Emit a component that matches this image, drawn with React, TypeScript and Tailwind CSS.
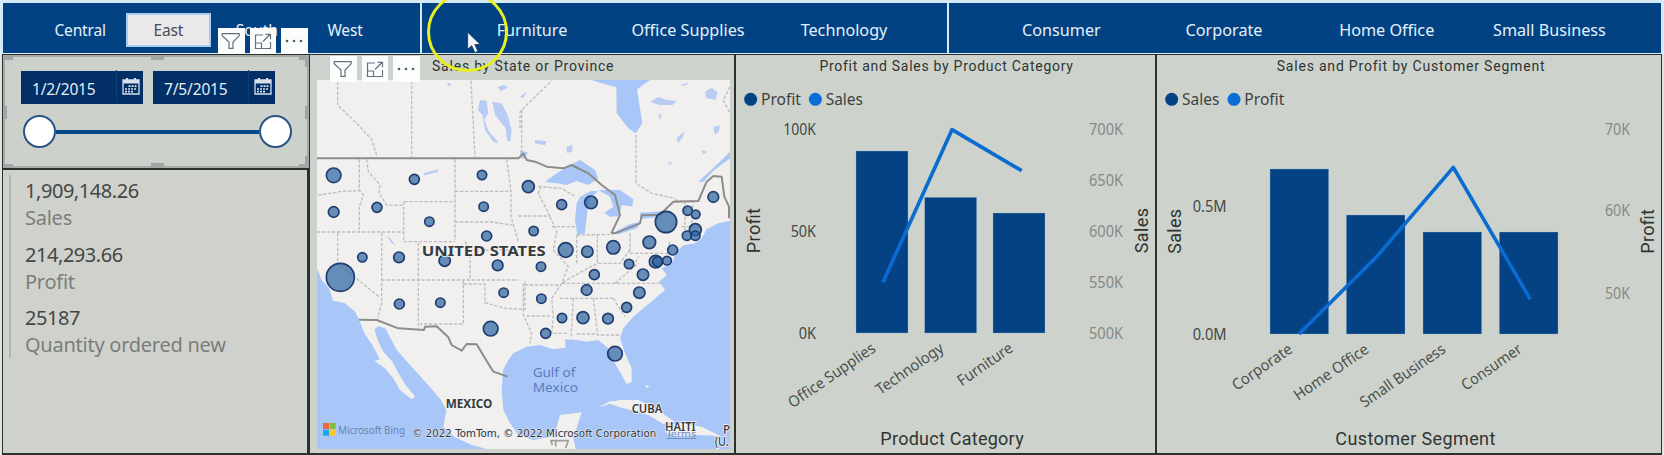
import React from "react";

const UI = "'Noto Sans', 'Open Sans', sans-serif";
const DIN = "Roboto, 'Liberation Sans', sans-serif";

type TabGroup = { items: string[]; box: string; cell: string };

const GROUPS: TabGroup[] = [
  { items: ["Central", "East", "South", "West"], box: "w-[417px] pl-[33px] text-[15.5px] tracking-[-0.15px]", cell: "w-[88.3px]" },
  { items: ["Furniture", "Office Supplies", "Technology"], box: "w-[525px] pl-[32px] text-[16.2px]", cell: "w-[156px]" },
  { items: ["Consumer", "Corporate", "Home Office", "Small Business"], box: "flex-1 pl-[31px] text-[16.2px]", cell: "w-[162.7px]" },
];

function Header() {
  return (
    <header className="flex h-[54px] w-full gap-[2px] bg-[#d6eaf6] pt-[3px] pb-px pl-[3px] pr-[3px]">
      {GROUPS.map((g) => (
        <div key={g.items[0]} className={`flex items-center bg-[#024283] ${g.box}`}>
          {g.items.map((t) => (
            <div key={t} className={`flex shrink-0 justify-center ${g.cell}`}>
              {t === "East" ? (
                <span className="mt-[3px] flex h-[34px] w-[85px] items-center justify-center border-2 border-[#a9cdf0] bg-[#e9e8ea] pt-[2px] text-[#4b4b50]">
                  {t}
                </span>
              ) : (
                <span className="pt-[5px] whitespace-nowrap text-[#e2f1fb]">{t}</span>
              )}
            </div>
          ))}
        </div>
      ))}
    </header>
  );
}

function Toolbar({ className }: { className: string }) {
  const b = "flex h-[26px] w-[26.5px] items-center justify-center bg-[#fcfdfd]";
  return (
    <div className={`absolute z-10 flex gap-[5px] ${className}`}>
      <div className={b}>
        <svg width="20" height="18" viewBox="0 0 20 18" fill="none" stroke="#66707c" strokeWidth="1.2">
          <path d="M1.2 1.6h17v2.2L12 10v6.4H8V10L1.2 3.8z" />
        </svg>
      </div>
      <div className={b}>
        <svg width="18" height="17" viewBox="0 0 18 17" fill="none" stroke="#66707c" strokeWidth="1.2">
          <path d="M9 2H1.5v13.5h15V9M1.5 10h6v5.5M9 8.5l7-7M11.5 1.3h5v5" />
        </svg>
      </div>
      <div className={b}>
        <svg width="18" height="6" viewBox="0 0 18 6" fill="#555d66">
          <circle cx="2" cy="3" r="1.3" />
          <circle cx="9" cy="3" r="1.3" />
          <circle cx="16" cy="3" r="1.3" />
        </svg>
      </div>
    </div>
  );
}

function DateBox({ value }: { value: string }) {
  return (
    <div className="flex h-[33px] w-[122px] items-center bg-[#012f66] pl-[11px]">
      <span className="w-[84px] pt-[4px] text-[15.5px] tracking-[-0.15px] text-[#e4edf5]">{value}</span>
      <span className="-mt-[3px] flex h-[33px] items-center border-l border-[#0c3f78] pl-[5px]">
        <svg width="18" height="17" viewBox="0 0 18 17">
          <path d="M1 2h16v14H1z" fill="none" stroke="#d6e0ea" strokeWidth="1.3" />
          <path d="M1 2h16v3.6H1zM4 0h2v3H4zM12 0h2v3h-2z" fill="#d6e0ea" />
          <path d="M6.5 8.2h8.5M3 11h12M3 13.7h9" stroke="#d6e0ea" strokeWidth="1.7" strokeDasharray="2 1" />
        </svg>
      </span>
    </div>
  );
}

const HANDLES = [
  "left-[-1px] top-[-1px] h-[4px] w-[9px]",
  "left-[146px] top-[-1px] h-[4px] w-[13px]",
  "right-[-1px] top-[-1px] h-[4px] w-[9px]",
  "left-[-1px] bottom-[-2px] h-[4px] w-[9px]",
  "left-[146px] bottom-[-2px] h-[5px] w-[13px]",
  "right-[-1px] bottom-[-2px] h-[4px] w-[9px]",
  "left-[-1px] top-[49px] h-[13px] w-[3px]",
  "right-[-2px] top-[49px] h-[13px] w-[4px]",
  "right-[-2px] top-0 h-[10px] w-[4px]",
  "right-[-2px] bottom-0 h-[10px] w-[4px]",
];

function Slicer() {
  return (
    <section className="relative z-[1] -mr-[2px] h-[113px] border-2 border-[#a9aba8] bg-[#cdd1cb] pt-[14px] pl-[16px]">
      <div className="flex gap-[10px]">
        <DateBox value="1/2/2015" />
        <DateBox value="7/5/2015" />
      </div>
      <div className="mt-[11px] ml-[2px] flex w-[269px] items-center">
        <span className="h-[33px] w-[33px] shrink-0 rounded-full border-[2.5px] border-[#2a5484] bg-white" />
        <span className="h-[4px] flex-1 bg-[#04498a]" />
        <span className="h-[33px] w-[33px] shrink-0 rounded-full border-[2.5px] border-[#2a5484] bg-white" />
      </div>
      {HANDLES.map((h) => (
        <i key={h} className={`absolute bg-[#a2a4a5] ${h}`} />
      ))}
    </section>
  );
}

const KPIS = [
  ["1,909,148.26", "Sales"],
  ["214,293.66", "Profit"],
  ["25187", "Quantity ordered new"],
];

function Kpis() {
  return (
    <section className="mt-[2px] flex-1 bg-[#cfd2cc] pt-[5px] pl-[6px]">
      <div className="flex h-[183px] flex-col border-l-2 border-[#b3b5b1] pl-[14px]">
        {KPIS.map(([v, l]) => (
          <div key={l} className="h-[63.5px] shrink-0">
            <div className="h-[28px] text-[20px] leading-[32px] tracking-[-0.45px] text-[#454745]">{v}</div>
            <div className="text-[20px] leading-[30px] tracking-[-0.25px] text-[#7b7d7a]">{l}</div>
          </div>
        ))}
      </div>
    </section>
  );
}

const DOTS: [number, number, number][] = [
  [86, 376, 22], [86, 486, 16], [328, 388, 15], [216, 472, 15], [373, 515, 14], [531, 375, 14], [536, 470, 14],
  [545, 558, 15], [172, 622, 14], [282, 622, 16], [419, 632, 17], [670, 410, 18], [770, 464, 15], [858, 457, 19],
  [1083, 516, 32], [1225, 441, 16], [1148, 482, 14], [1172, 493, 13], [1171, 539, 18], [1146, 557, 14],
  [1171, 557, 14], [686, 543, 14], [782, 600, 22], [847, 605, 17], [925, 592, 20], [1033, 577, 19],
  [1103, 600, 15], [106, 682, 42], [578, 646, 16], [283, 762, 15], [406, 758, 14], [596, 728, 14],
  [557, 836, 22], [708, 650, 14], [868, 674, 15], [972, 642, 14], [1014, 674, 17], [1052, 635, 19],
  [1058, 635, 15], [1086, 632, 13], [845, 720, 16], [1003, 728, 17], [965, 772, 15], [709, 746, 14],
  [771, 804, 14], [834, 803, 18], [909, 806, 16], [722, 850, 15], [930, 911, 22],
];

function MapView() {
  return (
    <svg className="ml-[7px] block" width="413" height="369" viewBox="36 90 1239 1107" preserveAspectRatio="none" fontFamily={UI}>
      <rect x="36" y="90" width="1239" height="1107" fill="#f1f0ee" />
      <g fill="#a8c7f8">
        <path d="M36 655L50 690L72 715L84 752L120 760L150 785L163 810L178 850L202 885L225 928L208 933L240 955L265 985L285 1020L320 1048L331 1040L300 1003L278 965L262 935L235 905L220 875L208 838L222 828L242 836L275 900L320 950L365 1000L408 1050L424 1080L415 1130L450 1162L500 1185L545 1197L36 1197Z" />
        <path d="M1275 512L1240 520L1205 538L1190 565L1170 580L1135 586L1112 610L1100 640L1070 655L1085 675L1062 695L1080 720L1045 750L1015 775L985 800L955 835L945 865L960 910L980 955L980 995L965 1003L945 965L920 925L910 895L880 870L845 875L815 870L780 868L782 893L745 898L705 885L665 890L625 910L610 930L594 960L590 1020L595 1080L615 1120L640 1155L685 1170L738 1160L752 1140L765 1095L830 1087L816 1130L805 1165L812 1197L1275 1197Z" />
        <path d="M720 395L755 370L795 345L825 330L870 360L880 385L850 405L815 393L785 405L755 400Z" />
        <path d="M825 440L860 422L880 424L852 448L845 500L840 550L817 555L810 510L815 460Z" />
        <path d="M880 420L945 420L985 448L982 470L950 465L943 498L915 500L898 488L925 470L915 440Z" />
        <path d="M925 548L975 522L1010 515L995 535L940 553ZM1005 488L1065 484L1052 502L1008 506Z" />
        <path d="M860 90L1035 90L996 118L1012 220L992 250L970 235L935 190L934 112L885 98Z" />
        <path d="M1180 395L1245 335L1275 305V325L1225 362L1195 395Z" />
      </g>
      <g fill="#b9cdf4">
        <path d="M525 150L545 152L550 190L538 210L552 245L575 270L580 280L565 276L540 240L532 195L518 180ZM562 155L590 160L608 195L620 240L616 275L606 272L602 235L570 195ZM578 112L595 104L608 112L588 124ZM425 100h14l-6 10z" />
        <path d="M1035 155l25-14 25 8 30 4-12 12-40 0zM1200 125l20-12 18 14-6 22-28-4zM1225 230l20-4-4 20-12 8zM1060 195l12-4-8 18zM1115 265l24-22-6 20-14 16zM690 270l35 4-5 12-30-6zM785 290l18-6-2 22-16 2zM1090 335l14 4-10 6zM1190 300l18 6-14 6zM1125 105l30-8-15 10zM645 300l25 8-15 20-10-5zM645 140l20-15-10 20zM355 370l45-12-2 8-40 10zM245 555l14 14 14 20-16-12z" />
      </g>
      <g fill="#f1f0ee">
        <path d="M940 1070L905 1058L945 1050L1000 1050L1055 1080L1110 1115L1075 1122L1030 1095ZM1080 1125L1130 1120L1190 1130L1245 1158L1180 1155L1110 1160L1085 1150ZM1020 1005l14 4-8 6zM880 1072l35-18 20 0-40 14z" />
      </g>
      <g fill="none" stroke="#bdbdbf" strokeWidth="4" strokeDasharray="10 5">
        <path d="M98 95V165L150 215L200 268L217 322M320 92V322M498 92L510 322M645 235V185L740 92M650 180V310M993 255V400L1040 430L1110 445M1275 110L1255 150L1275 190" />
        <path d="M40 436L110 424L165 422L175 435L163 470V545M36 546H298M163 328V422M185 328L190 365L225 405L222 430L245 465L296 466M298 455H450M296 455V575M296 575H450M450 328V570M450 424H618M450 516H560L620 525M605 328L618 424V500L640 575M640 498H735M98 548V640L222 740M230 548V760L218 805M340 578V835M230 690H640M495 600V690M480 575L495 600H650M475 690V822H345M475 702H540V758L600 775L660 778V690M735 498L700 430L710 405M740 530H815M700 410L770 415L812 440M735 500L755 545L745 600L790 650L770 700M815 555V640M877 553V640L820 670L770 700H1080M815 555L925 553M975 550V610H1095M975 600L945 640L877 640M770 700L740 745L745 800L740 850H790M665 798H740M660 705H770M655 700V795L680 850L675 880M765 745H925M805 745L798 865M865 745L878 855H945M815 852H878M925 745L960 800M930 700L1000 640M1110 450L1140 455V540M1165 450L1160 520M1130 530H1190M985 650L1000 620M1093 575V615" />
      </g>
      <g fill="none" stroke="#8c8d8b" strokeWidth="6" strokeLinejoin="round">
        <path d="M36 325H640L655 310L665 330L690 335L725 350L775 355L800 345L850 370L890 405L930 435L945 495L920 548L930 550L1005 520L1010 496L1065 494L1105 455L1180 453L1205 395L1225 378L1250 380L1258 440L1272 470V505" />
        <path d="M162 809L215 810L280 835L357 840L360 830L395 829L430 862L440 885L470 902L485 882L515 883L540 925L565 965L608 980" />
        <path d="M742 1185L738 1172H790L782 1194M752 1172V1190" strokeWidth="5" stroke="#9d9d9a" />
      </g>
      <g fill="#2a62a0" fillOpacity=".7" stroke="#1f3d70" strokeWidth="5">
        {DOTS.map(([x, y, r]) => (
          <circle key={`${x}-${y}`} cx={x} cy={y} r={r} />
        ))}
      </g>
      <g fill="#363a40" stroke="#f4f4f2" strokeWidth="5" paintOrder="stroke" fontWeight="700">
        <text x="350" y="619" fontSize="45" textLength="372" lengthAdjust="spacingAndGlyphs">UNITED STATES</text>
        <text x="422" y="1075" fontSize="36" textLength="140" lengthAdjust="spacingAndGlyphs">MEXICO</text>
        <text x="980" y="1090" fontSize="36" textLength="92" lengthAdjust="spacingAndGlyphs" fontWeight="600">CUBA</text>
        <text x="1080" y="1143" fontSize="35" textLength="92" lengthAdjust="spacingAndGlyphs" fontWeight="600">HAITI</text>
        <text x="1254" y="1152" fontSize="35" fontWeight="500">P</text>
        <text x="1229" y="1187" fontSize="35" fontWeight="500" textLength="42" lengthAdjust="spacingAndGlyphs">(U.</text>
      </g>
      <g fill="#5b7cc2" fontSize="39">
        <text x="683" y="981" textLength="128" lengthAdjust="spacingAndGlyphs">Gulf of</text>
        <text x="683" y="1027" textLength="136" lengthAdjust="spacingAndGlyphs">Mexico</text>
      </g>
      <path d="M54 1119h18v18H54z" fill="#f0653a" />
      <path d="M74 1119h18v18H74z" fill="#86bd3d" />
      <path d="M54 1139h18v18H54z" fill="#19a5ee" />
      <path d="M74 1139h18v18H74z" fill="#fdc62c" />
      <text x="100" y="1152" fontSize="35" fill="#6b80ab" textLength="200" lengthAdjust="spacingAndGlyphs">Microsoft Bing</text>
      <text x="322" y="1160" fontSize="29" fill="#30343a" stroke="#e9eef5" strokeWidth="3" paintOrder="stroke" fontFamily="'DejaVu Sans', sans-serif" textLength="732" lengthAdjust="spacingAndGlyphs">© 2022 TomTom, © 2022 Microsoft Corporation</text>
      <text x="1084" y="1161" fontSize="27" fill="#6b86b8" fontFamily="'DejaVu Sans', sans-serif" textDecoration="underline" textLength="90" lengthAdjust="spacingAndGlyphs">Terms</text>
    </svg>
  );
}

type Label = { t: string; x: number; y: number; w: number };

type ChartProps = {
  title: string;
  titleClass: string;
  width: number;
  viewBox: string;
  legend: Label[];
  left: Label[];
  right: Label[];
  bars: [number, number][];
  barWidth: number;
  base: number;
  line: string;
  cats: Label[];
  leftTitle: Label;
  rightTitle: Label;
  bottomTitle: Label;
};

function ComboChart(p: ChartProps) {
  return (
    <section className="flex h-full flex-col bg-[#cdd3cc]">
      <h2 className={`h-[25px] text-center text-[14px] leading-[22px] text-[#2f3431] ${p.titleClass}`} style={{ fontFamily: DIN }}>
        {p.title}
      </h2>
      <svg width={p.width} height="373" viewBox={p.viewBox} fontFamily={UI} className="block">
        {p.legend.map((l, i) => (
          <g key={l.t}>
            <circle cx={l.x - 31} cy="58" r="19.5" fill={i === 0 ? "#044283" : "#0a6ed6"} />
            <text x={l.x} y={l.y} fontSize="50" fill="#3d413e" textLength={l.w} lengthAdjust="spacingAndGlyphs">{l.t}</text>
          </g>
        ))}
        {p.left.map((l) => (
          <text key={l.t} x={l.x} y={l.y} fontSize="46" fill="#444845" textLength={l.w} lengthAdjust="spacingAndGlyphs">{l.t}</text>
        ))}
        {p.right.map((l) => (
          <text key={l.t} x={l.x} y={l.y} fontSize="46" fill="#858a86" textLength={l.w} lengthAdjust="spacingAndGlyphs">{l.t}</text>
        ))}
        {p.bars.map(([x, y]) => (
          <rect key={x} x={x} y={y} width={p.barWidth} height={p.base - y} fill="#044283" stroke="#8fb3d4" strokeWidth="1" />
        ))}
        <path d={p.line} fill="none" stroke="#0a6bd0" strokeWidth="11" strokeLinejoin="round" />
        {p.cats.map((l) => (
          <text key={l.t} x={l.x} y={l.y} textAnchor="end" fontSize="46" fill="#4b4f4c" textLength={l.w} lengthAdjust="spacingAndGlyphs" transform={`rotate(-34.5 ${l.x} ${l.y})`}>{l.t}</text>
        ))}
        <g fontFamily={DIN} fill="#2f3431" fontSize="54" textAnchor="middle">
          {[p.leftTitle, p.rightTitle].map((l) => (
            <text key={l.t} x={l.x} y={l.y} textLength={l.w} transform={`rotate(-90 ${l.x} ${l.y})`}>{l.t}</text>
          ))}
          <text x={p.bottomTitle.x} y={p.bottomTitle.y} textLength={p.bottomTitle.w}>{p.bottomTitle.t}</text>
        </g>
      </svg>
    </section>
  );
}

export default function App() {
  return (
    <div className="relative flex h-[455px] w-[1664px] flex-col overflow-hidden bg-[#dde6e6]" style={{ fontFamily: UI }}>
      <Header />
      <main className="h-[401px] pr-[2px] pl-[2px]">
        <div className="flex h-full bg-[#2b302d] pt-px pr-px pb-[2px] pl-px">
          <div className="mr-[3px] flex w-[304px] flex-col">
            <Slicer />
            <Kpis />
          </div>
          <section className="mr-[2px] flex w-[424px] flex-col bg-[#cdd3cc]">
            <h2 className="h-[25px] pl-[122px] text-[14px] leading-[22px] tracking-[0.8px] whitespace-nowrap text-[#2f3431]" style={{ fontFamily: DIN }}>
              Sales by State or Province
            </h2>
            <MapView />
          </section>
          <div className="mr-[2px] w-[419px]">
            <ComboChart
              title="Profit and Sales by Product Category"
              titleClass="tracking-[0.72px] pl-[2px]"
              width={419}
              viewBox="18 0 1257 1119"
              legend={[{ t: "Profit", x: 93, y: 76, w: 120 }, { t: "Sales", x: 287, y: 76, w: 112 }]}
              left={[{ t: "100K", x: 160, y: 164, w: 98 }, { t: "50K", x: 182, y: 471, w: 76 }, { t: "0K", x: 206, y: 776, w: 52 }]}
              right={[
                { t: "700K", x: 1077, y: 164, w: 102 }, { t: "650K", x: 1077, y: 319, w: 102 }, { t: "600K", x: 1077, y: 471, w: 102 },
                { t: "550K", x: 1077, y: 625, w: 102 }, { t: "500K", x: 1077, y: 776, w: 102 },
              ]}
              bars={[[378, 213], [584, 352], [789, 399]]}
              barWidth={156}
              base={759}
              line="M459 607L666 149L875 272"
              cats={[{ t: "Office Supplies", x: 440, y: 812, w: 306 }, { t: "Technology", x: 645, y: 812, w: 236 }, { t: "Furniture", x: 852, y: 812, w: 190 }]}
              leftTitle={{ t: "Profit", x: 90, y: 452, w: 136 }}
              rightTitle={{ t: "Sales", x: 1255, y: 452, w: 136 }}
              bottomTitle={{ t: "Product Category", x: 666, y: 1095, w: 430 }}
            />
          </div>
          <div className="w-[504px]">
            <ComboChart
              title="Sales and Profit by Customer Segment"
              titleClass="tracking-[0.8px] pl-[4px]"
              width={504}
              viewBox="21 0 1512 1119"
              legend={[{ t: "Sales", x: 96, y: 76, w: 112 }, { t: "Profit", x: 283, y: 76, w: 120 }]}
              left={[{ t: "0.5M", x: 128, y: 396, w: 102 }, { t: "0.0M", x: 128, y: 780, w: 102 }]}
              right={[{ t: "70K", x: 1365, y: 164, w: 75 }, { t: "60K", x: 1365, y: 409, w: 75 }, { t: "50K", x: 1365, y: 658, w: 75 }]}
              bars={[[360, 267], [589, 405], [819, 456], [1048, 456]]}
              barWidth={176}
              base={762}
              line="M447 762L680 530L910 262L1141 658"
              cats={[
                { t: "Corporate", x: 431, y: 815, w: 208 }, { t: "Home Office", x: 660, y: 815, w: 261 },
                { t: "Small Business", x: 890, y: 815, w: 299 }, { t: "Consumer", x: 1119, y: 815, w: 208 },
              ]}
              leftTitle={{ t: "Sales", x: 93, y: 454, w: 134 }}
              rightTitle={{ t: "Profit", x: 1512, y: 454, w: 134 }}
              bottomTitle={{ t: "Customer Segment", x: 796, y: 1095, w: 480 }}
            />
          </div>
        </div>
      </main>
      <Toolbar className="left-[218px] top-[28px]" />
      <Toolbar className="left-[330px] top-[56px]" />
      <div className="absolute top-[-8px] left-[427px] z-20 h-[80px] w-[81px] rounded-full border-[3.5px] border-[#e6ef20]" />
      <svg className="absolute top-[31px] left-[465px] z-20" width="19" height="24" viewBox="0 0 16 21">
        <path d="M2 1V16L5.6 12.8L8.4 19L11 17.8L8.3 11.8H13Z" fill="#f4f8fc" stroke="#23405f" strokeWidth=".8" />
      </svg>
    </div>
  );
}
